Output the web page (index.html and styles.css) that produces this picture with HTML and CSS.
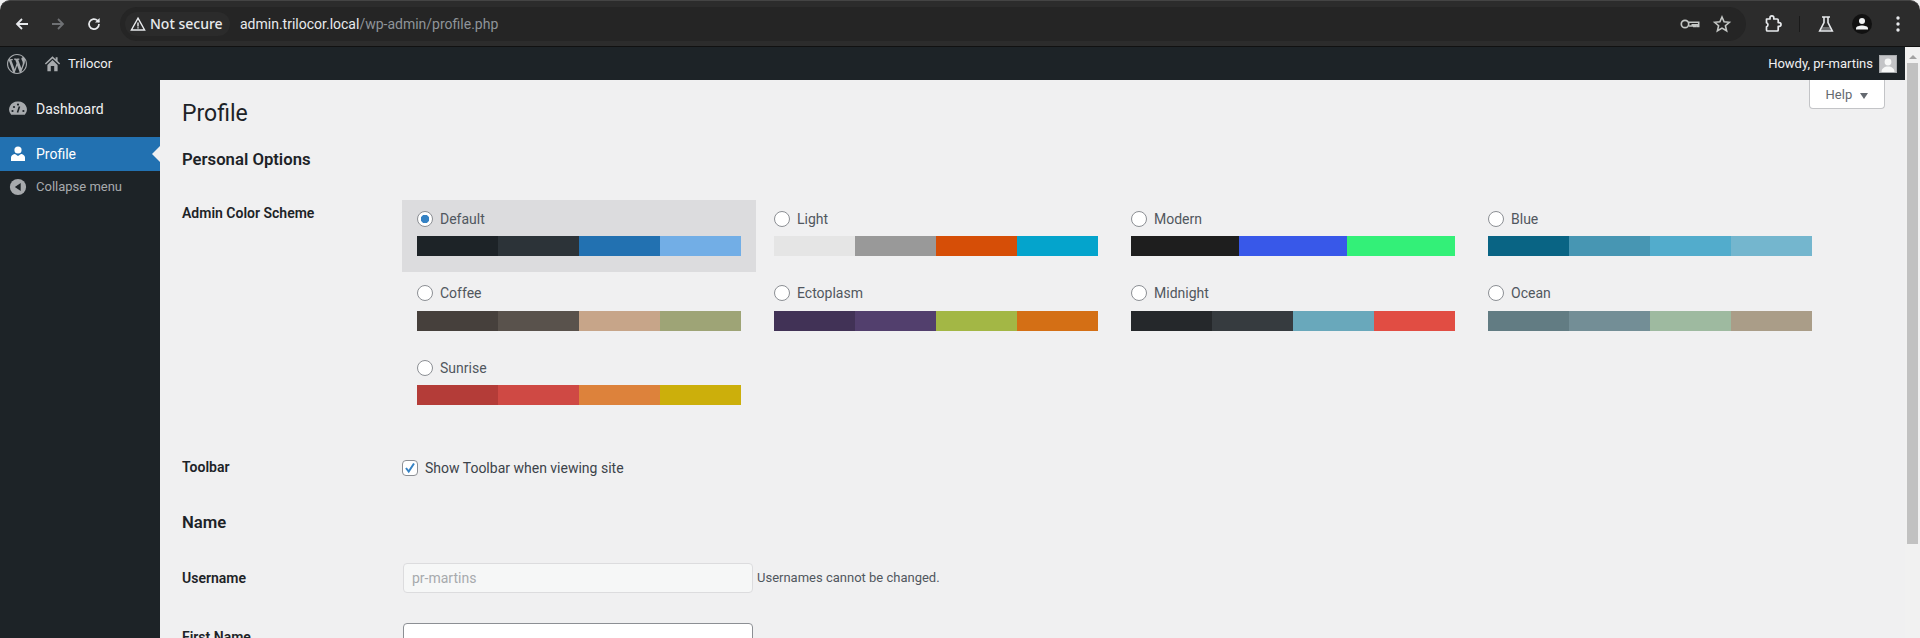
FILE: index.html
```html
<!DOCTYPE html>
<html lang="en">
<head>
    <meta charset="UTF-8">
    <meta name="viewport" content="width=device-width, initial-scale=1.0">
    <title>Profile</title>
    <link rel="stylesheet" href="styles.css">
</head>
<body>
<!-- Browser toolbar -->
<div class="browser-bar">
    <div class="nav-icons">
        <svg class="nav-icon" viewBox="0 0 16 16"><path d="M14 8H3M8 3 3 8l5 5" fill="none" stroke="#e8eaed" stroke-width="1.8"/></svg>
        <svg class="nav-icon" viewBox="0 0 16 16"><path d="M2 8h11M8 3l5 5-5 5" fill="none" stroke="#6f7174" stroke-width="1.8"/></svg>
        <svg class="nav-icon" viewBox="0 0 16 16"><path d="M13 8a5 5 0 1 1-1.5-3.5L13 6" fill="none" stroke="#e8eaed" stroke-width="1.7"/><path d="M13.6 2v4.6H9z" fill="#e8eaed"/></svg>
    </div>
    <div class="omnibox">
        <div class="security-chip">
            <svg class="warn-icon" viewBox="0 0 16 16"><path d="M8 2.2 14.6 14H1.4z" fill="none" stroke="#e8eaed" stroke-width="1.4"/><path d="M7.3 6.5h1.4v4H7.3zM7.3 11.2h1.4v1.3H7.3z" fill="#e8eaed"/></svg>
            <span>Not secure</span>
        </div>
        <div class="url"><span class="url-host">admin.trilocor.local</span>/wp-admin/profile.php</div>
        <div class="omni-actions">
            <svg class="omni-icon" viewBox="0 0 20 20"><circle cx="5" cy="10" r="3.7" fill="none" stroke="#c4c7c5" stroke-width="1.7"/><path d="M8.700 8.200h10v4.200h-1.600v-1.600h-1.700v1.600h-1.600v-1.600h-1.500v1.200H9" fill="none" stroke="#c4c7c5" stroke-width="1.6"/></svg>
            <svg class="omni-icon" viewBox="0 0 20 20"><path d="m10 3 2.100 4.800 5.200.5-3.900 3.400 1.200 5.100-4.600-2.700-4.600 2.700 1.200-5.100-3.900-3.400 5.200-.5z" fill="none" stroke="#c4c7c5" stroke-width="1.6"/></svg>
        </div>
    </div>
    <div class="browser-actions">
        <svg class="action-icon" viewBox="0 0 20 20"><path d="M3.500 5H7V3.800a1.900 1.900 0 0 1 3.800 0V5h3.400a1 1 0 0 1 1 1v2.600h.9a1.900 1.900 0 0 1 0 3.800h-.9V16a1 1 0 0 1-1 1H4.500a1 1 0 0 1-1-1v-3.200a2.100 2.100 0 0 0 0-4z" fill="none" stroke="#e8eaed" stroke-width="1.700" stroke-linejoin="round"/></svg>
        <span class="action-sep"></span>
        <svg class="action-icon" viewBox="0 0 20 20"><path d="M6 3h8M8 3v5.500L3.700 17h12.600L12 8.500V3" fill="none" stroke="#e8eaed" stroke-width="1.600"/><path d="M6.500 13h7l2 3.500h-11z" fill="#e8eaed" opacity=".35"/></svg>
        <span class="avatar-circle"><svg viewBox="0 0 20 20"><circle cx="10" cy="7" r="3" fill="#f1f3f4"/><path d="M4 15.500v-1.200c0-1.800 3.400-2.800 6-2.800s6 1 6 2.800v1.200z" fill="#f1f3f4"/></svg></span>
        <svg class="action-icon menu-dots" viewBox="0 0 20 20"><circle cx="10" cy="4" r="1.700" fill="#e8eaed"/><circle cx="10" cy="10" r="1.700" fill="#e8eaed"/><circle cx="10" cy="16" r="1.700" fill="#e8eaed"/></svg>
    </div>
</div>

<div class="viewport">
    <div class="page">
        <!-- Admin bar -->
        <div class="admin-bar">
            <svg class="wp-logo" viewBox="0 0 20 20"><path d="M20 10c0-5.510-4.490-10-10-10C4.480 0 0 4.490 0 10c0 5.520 4.480 10 10 10 5.510 0 10-4.480 10-10zM7.780 15.370L4.370 6.220c.55-.02 1.170-.08 1.170-.08.500-.06.440-1.130-.06-1.110 0 0-1.450.11-2.370.11-.18 0-.37 0-.58-.01C4.120 2.690 6.910 1.030 10 1.030c2.300 0 4.390.87 5.970 2.300-.66-.11-1.600.38-1.600 1.530 0 .71.430 1.310.870 2.030.35.610.54 1.360.54 2.460 0 1.490-1.400 5-1.400 5l-3.030-8.370c.54-.02.82-.17.82-.17.500-.05.440-1.250-.06-1.220 0 0-1.440.12-2.380.12-.87 0-2.330-.12-2.330-.12-.500-.03-.560 1.200-.06 1.220l.92.08 1.260 3.410zM17.410 10c.24-.64.74-1.870.43-4.250.7 1.290 1.050 2.710 1.050 4.250 0 3.290-1.730 6.240-4.480 7.820.5-1.340 1.570-4.460 3-7.820zM6.100 18.090C3.120 16.650 1.110 13.530 1.110 10c0-1.300.23-2.480.72-3.590C3.250 10.300 4.670 14.200 6.100 18.090zm4.030-6.630l2.580 6.980c-.88.3-1.800.45-2.710.45-.76 0-1.500-.11-2.230-.32.84-2.360 1.680-4.740 2.360-7.110z" fill="#a7aaad"/></svg>
            <svg class="home-icon" viewBox="0 0 20 20"><path d="M10 1.500 1 10l1.200 1.200L10 4l7.800 7.200L19 10l-3-2.800V2.500h-2.300v2.600z" fill="#a7aaad"/><path d="M4 11.700 10 6l6 5.700V19h-4v-6H8v6H4z" fill="#a7aaad"/></svg>
            <span class="site-name">Trilocor</span>
            <span class="howdy">Howdy, pr-martins</span>
            <span class="user-thumb"><svg viewBox="0 0 16 16"><rect width="16" height="16" fill="#c3c4c7"/><circle cx="8" cy="6" r="3.400" fill="#f6f7f7"/><path d="M1.500 16c0-3.500 3-5.400 6.500-5.400s6.500 1.900 6.500 5.400z" fill="#f6f7f7"/></svg></span>
        </div>

        <div class="wrap-area">
            <!-- Sidebar -->
            <nav class="sidebar">
                <a class="menu-item">
                    <svg class="menu-icon" viewBox="0 0 20 20"><path d="M10 2.500a8.500 8 0 0 0-6.800 13.200h13.600A8.500 8 0 0 0 10 2.500z" fill="#a7aaad"/><path d="m11.500 7.500-2 6" stroke="#1d2327" stroke-width="1.600"/><circle cx="6" cy="8" r="1.100" fill="#1d2327"/><circle cx="10" cy="5.600" r="1.100" fill="#1d2327"/><circle cx="4.500" cy="12" r="1.100" fill="#1d2327"/><circle cx="15.400" cy="12" r="1.100" fill="#1d2327"/></svg>
                    <span>Dashboard</span>
                </a>
                <a class="menu-item menu-item-active">
                    <svg class="menu-icon" viewBox="0 0 20 20"><circle cx="10" cy="6" r="3.600" fill="#fff"/><path d="M3 17v-3.500c0-2 2.500-3.500 4-3.500l3 2 3-2c1.500 0 4 1.500 4 3.500V17z" fill="#fff"/></svg>
                    <span>Profile</span>
                </a>
                <a class="menu-collapse">
                    <svg class="menu-icon" viewBox="0 0 20 20"><circle cx="10" cy="10" r="9" fill="#a7aaad"/><path d="M13 5.500v9L6.500 10z" fill="#1d2327"/></svg>
                    <span>Collapse menu</span>
                </a>
            </nav>

            <!-- Main content -->
            <main class="content">
                <button class="help-tab">Help <span class="help-arrow"></span></button>
                <h1>Profile</h1>
                <h2>Personal Options</h2>

                <div class="form-row scheme-row">
                    <div class="row-label">Admin Color Scheme</div>
                    <div class="scheme-grid">
                        <div class="scheme scheme-selected">
                            <label class="scheme-name"><span class="radio radio-on"></span>Default</label>
                            <div class="palette"><i class="c-default-1"></i><i class="c-default-2"></i><i class="c-default-3"></i><i class="c-default-4"></i></div>
                        </div>
                        <div class="scheme">
                            <label class="scheme-name"><span class="radio"></span>Light</label>
                            <div class="palette"><i class="c-light-1"></i><i class="c-light-2"></i><i class="c-light-3"></i><i class="c-light-4"></i></div>
                        </div>
                        <div class="scheme">
                            <label class="scheme-name"><span class="radio"></span>Modern</label>
                            <div class="palette"><i class="c-modern-1"></i><i class="c-modern-2"></i><i class="c-modern-3"></i></div>
                        </div>
                        <div class="scheme">
                            <label class="scheme-name"><span class="radio"></span>Blue</label>
                            <div class="palette"><i class="c-blue-1"></i><i class="c-blue-2"></i><i class="c-blue-3"></i><i class="c-blue-4"></i></div>
                        </div>
                        <div class="scheme">
                            <label class="scheme-name"><span class="radio"></span>Coffee</label>
                            <div class="palette"><i class="c-coffee-1"></i><i class="c-coffee-2"></i><i class="c-coffee-3"></i><i class="c-coffee-4"></i></div>
                        </div>
                        <div class="scheme">
                            <label class="scheme-name"><span class="radio"></span>Ectoplasm</label>
                            <div class="palette"><i class="c-ecto-1"></i><i class="c-ecto-2"></i><i class="c-ecto-3"></i><i class="c-ecto-4"></i></div>
                        </div>
                        <div class="scheme">
                            <label class="scheme-name"><span class="radio"></span>Midnight</label>
                            <div class="palette"><i class="c-mid-1"></i><i class="c-mid-2"></i><i class="c-mid-3"></i><i class="c-mid-4"></i></div>
                        </div>
                        <div class="scheme">
                            <label class="scheme-name"><span class="radio"></span>Ocean</label>
                            <div class="palette"><i class="c-ocean-1"></i><i class="c-ocean-2"></i><i class="c-ocean-3"></i><i class="c-ocean-4"></i></div>
                        </div>
                        <div class="scheme">
                            <label class="scheme-name"><span class="radio"></span>Sunrise</label>
                            <div class="palette"><i class="c-sun-1"></i><i class="c-sun-2"></i><i class="c-sun-3"></i><i class="c-sun-4"></i></div>
                        </div>
                    </div>
                </div>

                <div class="form-row toolbar-row">
                    <div class="row-label">Toolbar</div>
                    <label class="check-label">
                        <span class="checkbox"><svg viewBox="0 0 14 14"><path d="m3 7 2.700 3.500L11 2.500" fill="none" stroke="#3582c4" stroke-width="2"/></svg></span>
                        Show Toolbar when viewing site
                    </label>
                </div>

                <h2 class="name-title">Name</h2>

                <div class="form-row username-row">
                    <div class="row-label">Username</div>
                    <input class="text-input" type="text" value="pr-martins" disabled>
                    <span class="description">Usernames cannot be changed.</span>
                </div>

                <div class="form-row firstname-row">
                    <div class="row-label">First Name</div>
                    <input class="text-input" type="text">
                </div>
            </main>
        </div>
    </div>

    <!-- Page scrollbar -->
    <div class="scrollbar">
        <span class="scroll-arrow"></span>
        <span class="scroll-thumb"></span>
    </div>
</div>
</body>
</html>
```

FILE: styles.css
```css
* {
    box-sizing: border-box;
}

html, body {
    height: 100%;
}

body {
    margin: 0;
    display: flex;
    flex-direction: column;
    overflow: hidden;
    font-family: Roboto, "Liberation Sans", sans-serif;
    font-size: 13px;
    color: #3c434a;
    background-color: #f0f0f1;
}

/* Browser toolbar */
.browser-bar {
    height: 47px;
    flex: none;
    display: flex;
    align-items: center;
    background-color: #2c2c2c;
    border-top: 1px solid #444;
    border-bottom: 1px solid #111;
    border-radius: 10px 10px 0 0;
}

.nav-icons {
    display: flex;
    align-items: center;
    gap: 20px;
    padding-left: 14px;
    width: 120px;
}

.nav-icon {
    width: 16px;
    height: 16px;
}

.omnibox {
    width: 1626px;
    height: 34px;
    display: flex;
    align-items: center;
    background-color: #252525;
    border-radius: 17px;
    padding-left: 5px;
}

.security-chip {
    display: flex;
    align-items: center;
    gap: 4px;
    width: 105px;
    height: 24px;
    padding-left: 5px;
    border-radius: 12px;
    background-color: #2b2b2b;
    color: #e8eaed;
    font-family: "Noto Sans", sans-serif;
    font-size: 14px;
    font-weight: 500;
}

.warn-icon {
    width: 16px;
    height: 16px;
    flex: none;
}

.url {
    margin-left: 10px;
    font-size: 14px;
    color: #8f9499;
}

.url-host {
    color: #e8eaed;
}

.omni-actions {
    margin-left: auto;
    display: flex;
    align-items: center;
    gap: 12px;
    padding-right: 14px;
}

.omni-icon {
    width: 20px;
    height: 20px;
}

.browser-actions {
    display: flex;
    align-items: center;
    padding-left: 17px;
}

.action-icon {
    width: 20px;
    height: 20px;
}

.action-sep {
    width: 1px;
    height: 16px;
    margin: 0 16px;
    background-color: #1a1a1a;
}

.avatar-circle {
    width: 20px;
    height: 20px;
    margin-left: 16px;
    border-radius: 50%;
    background-color: #111;
    display: flex;
}

.menu-dots {
    margin-left: 16px;
}

/* Page area */
.viewport {
    flex: 1;
    display: flex;
    min-height: 0;
}

.page {
    flex: 1;
    min-width: 0;
    display: flex;
    flex-direction: column;
}

.admin-bar {
    height: 33px;
    flex: none;
    display: flex;
    align-items: center;
    padding: 0 8px 0 7px;
    background-color: #1d2327;
    color: #f0f0f1;
}

.wp-logo {
    width: 20px;
    height: 20px;
}

.home-icon {
    width: 17px;
    height: 17px;
    margin-left: 17px;
}

.site-name {
    margin-left: 7px;
}

.howdy {
    margin-left: auto;
}

.user-thumb {
    width: 18px;
    height: 18px;
    margin-left: 6px;
    border: 1px solid #a7aaad;
    display: flex;
}

.wrap-area {
    flex: 1;
    display: flex;
    min-height: 0;
}

/* Sidebar */
.sidebar {
    width: 160px;
    flex: none;
    padding-top: 12px;
    background-color: #1d2327;
}

.menu-item {
    height: 34px;
    display: flex;
    align-items: center;
    gap: 8px;
    padding-left: 8px;
    color: #f0f0f1;
    font-size: 14px;
    margin-bottom: 11px;
    position: relative;
}

.menu-item-active {
    margin-bottom: 0;
    background-color: #2271b1;
    color: #fff;
}

.menu-item-active::after {
    content: "";
    position: absolute;
    right: 0;
    top: 9px;
    border: 8px solid transparent;
    border-left-width: 0;
    border-right-color: #f0f0f1;
}

.menu-icon {
    width: 20px;
    height: 20px;
    flex: none;
}

.menu-collapse {
    height: 31px;
    display: flex;
    align-items: center;
    gap: 9px;
    padding-left: 9px;
    color: #a7aaad;
    font-size: 13px;
}

.menu-collapse .menu-icon {
    width: 18px;
    height: 18px;
}

/* Content */
.content {
    flex: 1;
    min-width: 0;
    position: relative;
    overflow: hidden;
    padding-left: 22px;
}

.help-tab {
    position: absolute;
    top: 0;
    right: 20px;
    width: 76px;
    height: 29px;
    padding: 0;
    border: 1px solid #c3c4c7;
    border-top: none;
    border-radius: 0 0 4px 4px;
    background-color: #fff;
    color: #646970;
    font: 13px Roboto, sans-serif;
}

.help-arrow {
    display: inline-block;
    margin-left: 5px;
    vertical-align: 0;
    border: 4px solid transparent;
    border-bottom-width: 0;
    border-top-width: 6px;
    border-top-color: #646970;
}

h1 {
    margin: 0;
    padding-top: 19px;
    font-size: 23px;
    font-weight: 400;
    line-height: 29px;
    color: #1d2327;
}

h2 {
    margin: 21px 0 0;
    font-size: 16.7px;
    font-weight: 600;
    line-height: 21px;
    color: #1d2327;
}

.form-row {
    display: flex;
    align-items: flex-start;
}

.row-label {
    width: 220px;
    flex: none;
    font-size: 14px;
    font-weight: 600;
    color: #1d2327;
    line-height: 18px;
}

.scheme-row {
    margin-top: 30px;
}

.scheme-row .row-label {
    padding-top: 4px;
}

.scheme-grid {
    display: grid;
    grid-template-columns: repeat(4, 354px);
    gap: 3px;
}

.scheme {
    height: 71.5px;
    padding: 5px 15px 15px;
}

.scheme-selected {
    background-color: #dcdcde;
}

.scheme-name {
    display: flex;
    align-items: center;
    height: 27.5px;
    margin-bottom: 3.5px;
    font-size: 14px;
    color: #50575e;
}

.radio {
    width: 16px;
    height: 16px;
    margin-right: 7px;
    border: 1px solid #8c8f94;
    border-radius: 50%;
    background-color: #fff;
    flex: none;
}

.radio-on {
    background: radial-gradient(circle, #3582c4 0 4px, #fff 4.5px);
}

.palette {
    display: flex;
    height: 20px;
}

.palette i {
    flex: 1;
}

.c-default-1 { background-color: #1d2327; }
.c-default-2 { background-color: #2c3338; }
.c-default-3 { background-color: #2271b1; }
.c-default-4 { background-color: #72aee6; }
.c-light-1 { background-color: #e5e5e5; }
.c-light-2 { background-color: #999; }
.c-light-3 { background-color: #d64e07; }
.c-light-4 { background-color: #04a4cc; }
.c-modern-1 { background-color: #1e1e1e; }
.c-modern-2 { background-color: #3858e9; }
.c-modern-3 { background-color: #33f078; }
.c-blue-1 { background-color: #096484; }
.c-blue-2 { background-color: #4796b3; }
.c-blue-3 { background-color: #52accc; }
.c-blue-4 { background-color: #74b6ce; }
.c-coffee-1 { background-color: #46403c; }
.c-coffee-2 { background-color: #59524c; }
.c-coffee-3 { background-color: #c7a589; }
.c-coffee-4 { background-color: #9ea476; }
.c-ecto-1 { background-color: #413256; }
.c-ecto-2 { background-color: #523f6d; }
.c-ecto-3 { background-color: #a3b745; }
.c-ecto-4 { background-color: #d46f15; }
.c-mid-1 { background-color: #25282b; }
.c-mid-2 { background-color: #363b3f; }
.c-mid-3 { background-color: #69a8bb; }
.c-mid-4 { background-color: #e14d43; }
.c-ocean-1 { background-color: #627c83; }
.c-ocean-2 { background-color: #738e96; }
.c-ocean-3 { background-color: #9ebaa0; }
.c-ocean-4 { background-color: #aa9d88; }
.c-sun-1 { background-color: #b43c38; }
.c-sun-2 { background-color: #cf4944; }
.c-sun-3 { background-color: #dd823b; }
.c-sun-4 { background-color: #ccaf0b; }

.toolbar-row {
    margin-top: 37px;
}

.check-label {
    display: flex;
    align-items: center;
    gap: 7px;
    margin-top: 2px;
    font-size: 14px;
    color: #3c434a;
}

.checkbox {
    width: 16px;
    height: 16px;
    border: 1px solid #8c8f94;
    border-radius: 4px;
    background-color: #fff;
    display: flex;
}

.name-title {
    margin-top: 36px;
}

.username-row {
    margin-top: 30px;
    align-items: center;
}

.text-input {
    width: 350px;
    height: 30px;
    margin-left: 1px;
    padding: 0 8px;
    border: 1px solid #8c8f94;
    border-radius: 4px;
    background-color: #fff;
    color: #2c3338;
    font: 14px Roboto, sans-serif;
}

.text-input:disabled {
    border-color: #dcdcde;
    background-color: #f6f7f7;
    color: #a7aaad;
}

.description {
    margin-left: 4px;
    font-size: 13px;
    color: #50575e;
}

.firstname-row {
    margin-top: 30px;
}

.firstname-row .row-label {
    padding-top: 5px;
}

/* Scrollbar */
.scrollbar {
    width: 15px;
    flex: none;
    display: flex;
    flex-direction: column;
    align-items: center;
    background-color: #f1f1f1;
}

.scroll-arrow {
    margin-top: 8px;
    border: 4px solid transparent;
    border-top-width: 0;
    border-bottom-color: #a3a3a3;
}

.scroll-thumb {
    width: 11px;
    height: 481px;
    margin-top: 4px;
    background-color: #c1c1c1;
}
```
